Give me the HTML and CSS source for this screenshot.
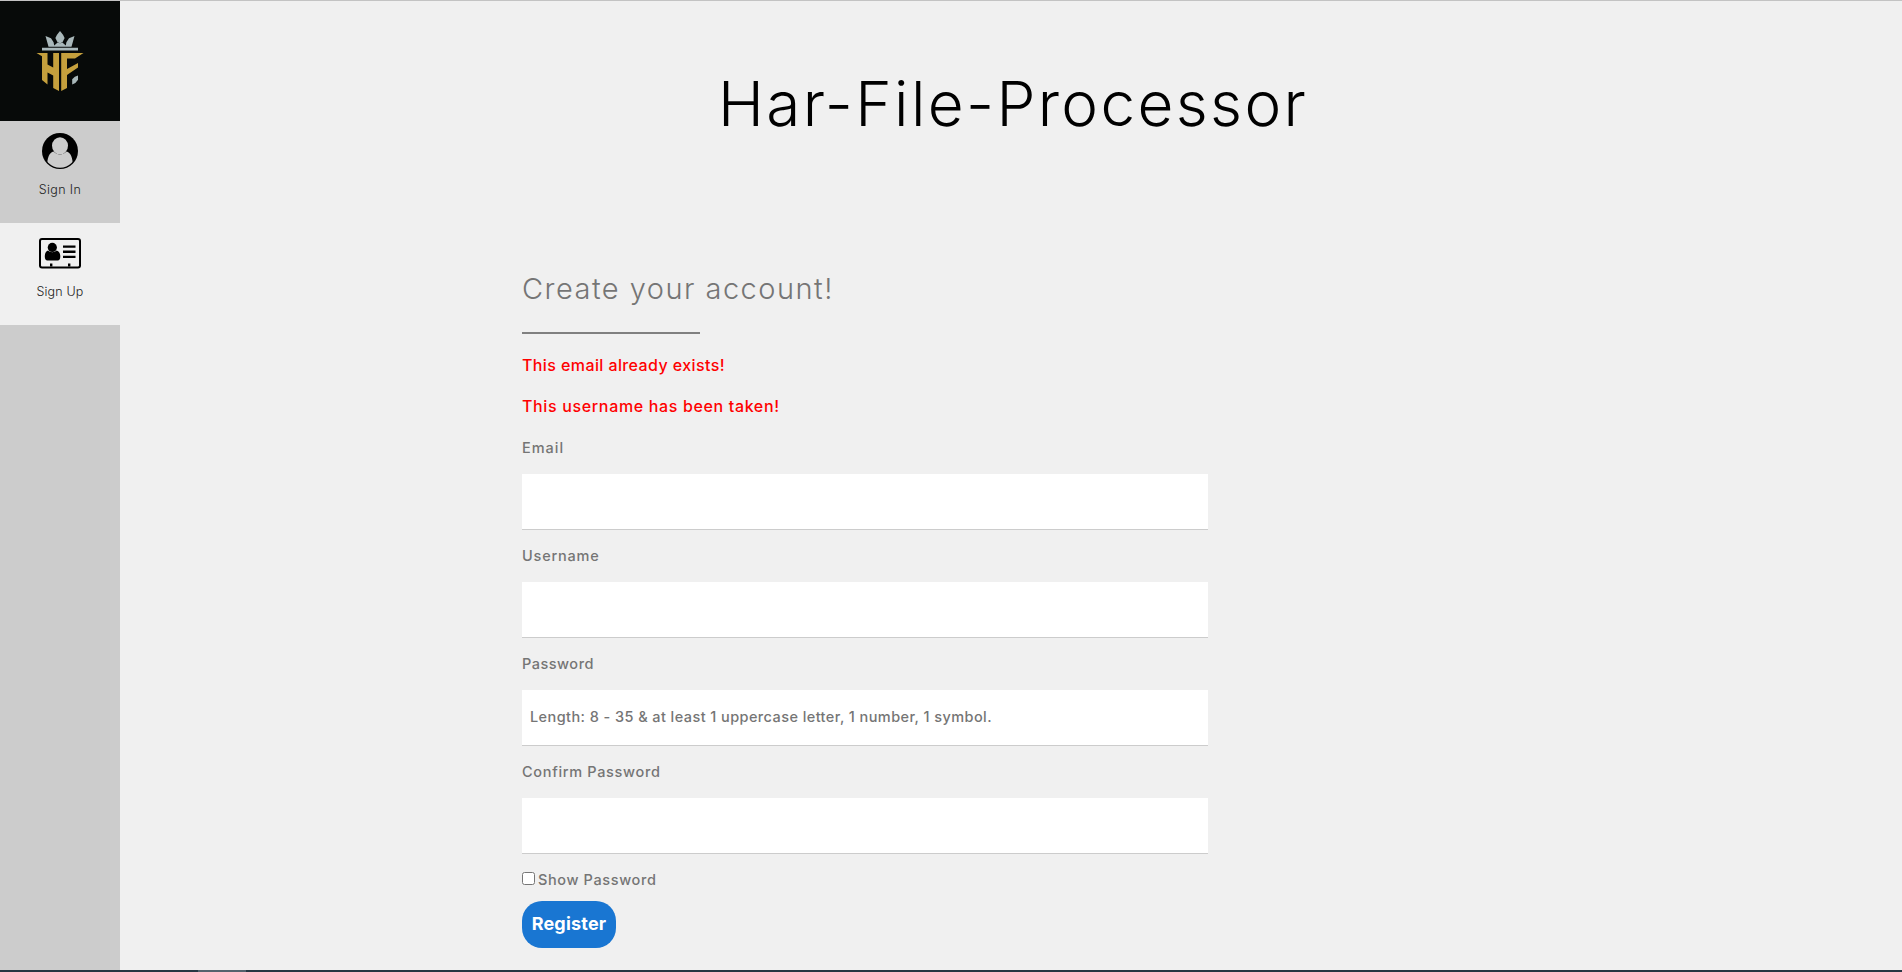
FILE: index.html
```
<!DOCTYPE html>
<html lang="en">
<head>
<meta charset="utf-8">
<title>Har-File-Processor</title>
<link rel="stylesheet" href="styles.css">
</head>
<body>
<div class="app">
  <nav class="sidebar">
    <a class="logo">
      <svg width="120" height="120" viewBox="0 1 120 120">
        <g fill="#a9b8ba">
          <path d="M42 47.8h36v2.6H42z"/>
          <path d="M48.500 46.800L45.500 36l5.500 2.200 2.600 4 .6 3.200 2-1.600 1.400-1.200c1.500 1 3.400 1 4.800 0l1.400 1.200 2 1.600.6-3.200 2.600-4L74.500 36l-3 10.800z"/>
          <path d="M60 31l3 3.800 1.600 3.200-2 4L60 43.500 57.400 42l-2-4 1.600-3.200z"/>
          <path d="M78 75.500v4.300l-2.600 3.200-3.200 1.600v-5.300l2.600-2.500z"/>
        </g>
        <g fill="#c5a03d">
          <path d="M36.500 53H47.500v11.600l5.700 3V53H59v38l-5.800-3V75.500l-5.700-3V84.500L42 80V56.300z"/>
          <path d="M61.200 53H83.500L75 58.600h-8v10.500L78 63v4.500L67 75v13l-5.800 3z"/>
        </g>
      </svg>
    </a>
    <a class="nav-item">
      <svg width="44" height="44" viewBox="38 129 44 44">
        <defs><clipPath id="disc"><circle cx="60" cy="151" r="16.700"/></clipPath></defs>
        <circle cx="60" cy="151" r="18"/>
        <path clip-path="url(#disc)" fill="#ccc" d="M47 168c0-11 2.500-15.500 6.500-16.500 4 3.900 9 3.900 13 0 4 1 6.500 5.500 6.500 16.500z"/>
        <ellipse cx="60" cy="145.800" rx="8" ry="8.600" fill="#ccc"/>
      </svg>
      <span class="nav-label label-in">Sign In</span>
    </a>
    <a class="nav-item active">
      <svg width="44" height="44" viewBox="38 231 44 44">
        <rect x="40" y="239" width="40" height="28.500" rx="2" fill="none" stroke="#000" stroke-width="2"/>
        <circle cx="52.300" cy="247.400" r="4.600"/>
        <path d="M48 250.500c2.600 2.200 6 2.200 8.600 0 2.500.5 3.700 3 3.700 6 0 2.600-1 4-2.600 4H47.400c-1.600 0-2.600-1.400-2.600-4 0-3 1-5.500 3.200-6z"/>
        <path d="M63 245.500h12.500v2.300H63zm0 5.100h12.500v2.300H63zm0 5.100h12.500v2.300H63zM50 263.500h2.400v3H50zm18 0h2.400v3H68z"/>
      </svg>
      <span class="nav-label label-up">Sign Up</span>
    </a>
  </nav>
  <main class="content">
    <h1 class="title">Har-File-Processor</h1>
    <form class="form">
      <h2 class="heading">Create your account!</h2>
      <hr class="rule">
      <p class="error e1">This email already exists!</p>
      <p class="error e2">This username has been taken!</p>
      <label class="label l-email" for="email">Email</label>
      <input class="field" id="email" type="text">
      <label class="label l-user" for="user">Username</label>
      <input class="field" id="user" type="text">
      <label class="label l-pass" for="pass">Password</label>
      <input class="field" id="pass" type="password" placeholder="Length: 8 - 35 &amp; at least 1 uppercase letter, 1 number, 1 symbol.">
      <label class="label l-conf" for="conf">Confirm Password</label>
      <input class="field" id="conf" type="password">
      <div class="show"><input class="check" id="show" type="checkbox"><label class="show-label" for="show">Show Password</label></div>
      <button class="register" type="button">Register</button>
    </form>
  </main>
</div>
<footer class="taskbar"><div class="task"></div></footer>
</body>
</html>
```
FILE: styles.css
```
* { box-sizing: border-box; }
body {
  margin: 0;
  height: 972px;
  overflow: hidden;
  display: flex;
  flex-direction: column;
  background: #f0f0f0;
  border-top: 1px solid #c3c3c3;
  font-family: Inter, "Open Sans", sans-serif;
  color: #757575;
}
.app { flex: 1; min-height: 0; display: flex; }
.sidebar { width: 120px; background: #ccc; }
.logo { display: block; height: 120px; background: #070a09; }
.logo svg { display: block; }
.nav-item {
  display: flex;
  flex-direction: column;
  align-items: center;
  height: 102px;
  padding-top: 8px;
}
.active { background: #f0f0f0; }
.nav-label {
  margin-top: 8px;
  font-size: 12.5px;
  line-height: 18px;
  font-weight: 300;
  color: #222;
  white-space: nowrap;
}
.label-in { letter-spacing: 0.35px; }
.label-up { letter-spacing: 0.15px; }
.content { flex: 1; }
.title {
  margin: 63px 0 0 598px;
  font-size: 62px;
  line-height: 79px;
  font-weight: 300;
  letter-spacing: 2.35px;
  color: #000;
  white-space: nowrap;
}
.form {
  display: flex;
  flex-direction: column;
  align-items: flex-start;
  width: 686px;
  margin: 126px 0 0 402px;
}
.heading { margin: 0; font-size: 29px; line-height: 40px; font-weight: 300; letter-spacing: 1.47px; white-space: nowrap; }
.rule { width: 178px; height: 2px; margin: 23px 0 0; border: 0; background: #808080; }
.error { margin: 0; font-size: 16px; line-height: 20px; font-weight: 500; color: #f00; white-space: nowrap; }
.e1 { margin-top: 21px; letter-spacing: 0.4px; }
.e2 { margin-top: 21px; letter-spacing: 0.65px; }
.label { height: 20px; font-size: 14.5px; line-height: 20px; font-weight: 500; margin: 16px 0; }
.l-email { margin: 22px 0 16px; letter-spacing: 1px; }
.l-user { letter-spacing: 0.8px; }
.l-pass { letter-spacing: 0.5px; }
.l-conf { letter-spacing: 0.68px; }
.field {
  width: 686px;
  height: 56px;
  padding: 0 8px 2px;
  border: 0;
  border-bottom: 1px solid #ccc;
  background: #fff;
  font: 500 14.5px/20px Inter, "Open Sans", sans-serif;
  letter-spacing: 0.42px;
}
.field::placeholder { color: #757575; opacity: 1; }
.show { display: flex; align-items: flex-start; height: 20px; margin-top: 16px; }
.check { width: 13px; height: 13px; margin: 2px 3px 0 0; }
.show-label { font-size: 14.5px; line-height: 20px; font-weight: 500; letter-spacing: 0.62px; }
.register {
  width: 94px;
  height: 47px;
  margin-top: 11px;
  padding: 0 0 1px;
  border: 0;
  border-radius: 20px;
  background: #1976d2;
  color: #fff;
  font: 700 18px/20px Inter, "Open Sans", sans-serif;
  letter-spacing: 0.2px;
}
.taskbar { height: 2px; padding-left: 198px; background: #263743; }
.task { width: 48px; height: 2px; background: #53626d; }
```
